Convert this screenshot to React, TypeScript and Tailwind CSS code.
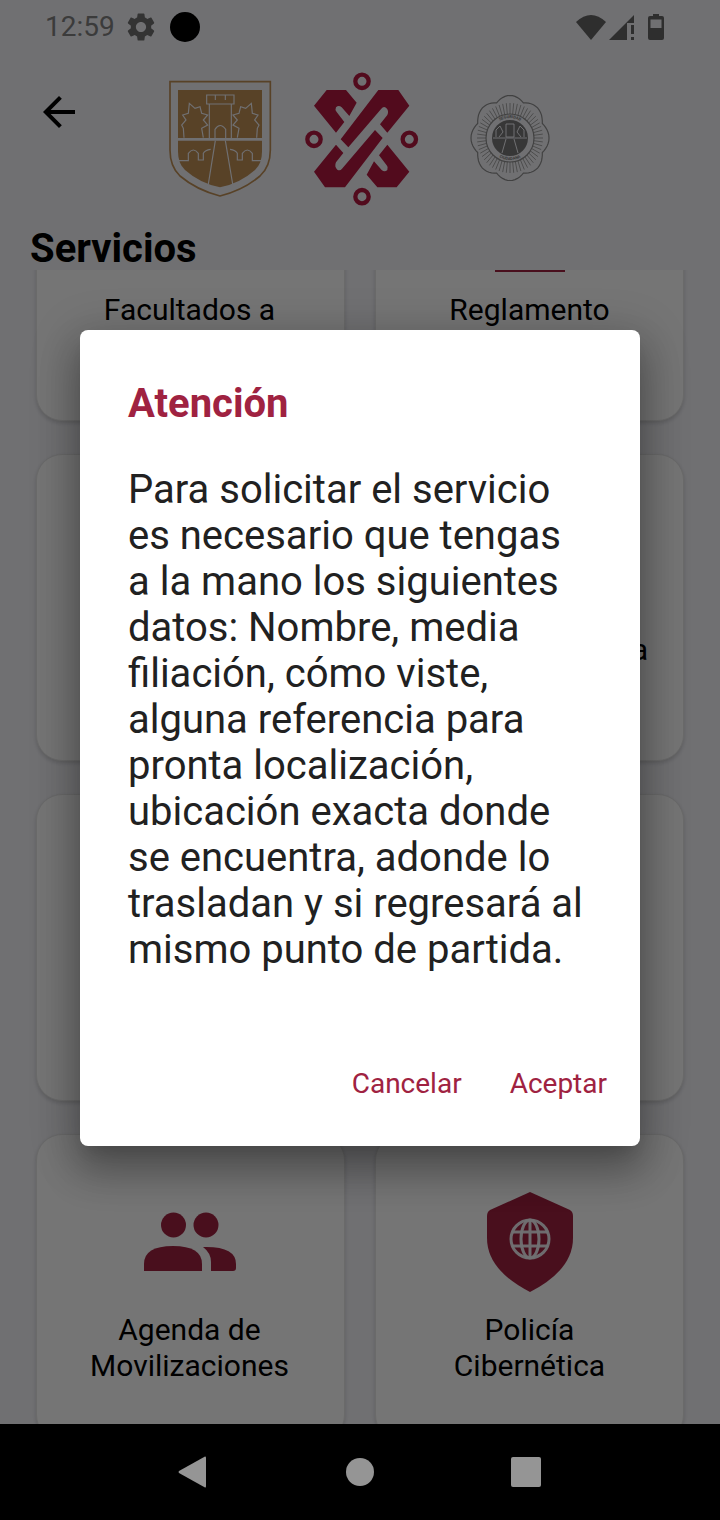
const roboto = { fontFamily: "Roboto, sans-serif" };

const GEAR =
  "M19.14 12.94c.04-.3.06-.61.06-.94 0-.32-.02-.64-.07-.94l2.03-1.58c.18-.14.23-.41.12-.61l-1.92-3.32c-.12-.22-.37-.29-.59-.22l-2.39.96c-.5-.38-1.03-.7-1.62-.94l-.36-2.54c-.04-.24-.24-.41-.48-.41h-3.84c-.24 0-.43.17-.47.41l-.36 2.54c-.59.24-1.13.57-1.62.94l-2.39-.96c-.22-.08-.47 0-.59.22L2.74 8.87c-.12.21-.08.47.12.61l2.03 1.58c-.05.3-.09.63-.09.94s.02.64.07.94l-2.03 1.58c-.18.14-.23.41-.12.61l1.92 3.32c.12.22.37.29.59.22l2.39-.96c.5.38 1.03.7 1.62.94l.36 2.54c.05.24.24.41.48.41h3.84c.24 0 .44-.17.47-.41l.36-2.54c.59-.24 1.13-.56 1.62-.94l2.39.96c.22.08.47 0 .59-.22l1.92-3.32c.12-.22.07-.47-.12-.61l-2.01-1.58zM12 15.6c-1.98 0-3.6-1.62-3.6-3.6s1.62-3.6 3.6-3.6 3.6 1.62 3.6 3.6-1.62 3.6-3.6 3.6z";

function StatusBar() {
  return (
    <div className="flex h-[54px] items-center justify-between pl-[45px] pr-[56px]">
      <div className="flex items-center">
        <span className="text-[28px] leading-none text-[#828282]">12:59</span>
        <svg viewBox="0 0 24 24" className="ml-[9px] h-[34px] w-[34px] fill-[#707070]">
          <path d={GEAR} />
        </svg>
        <div className="ml-[12px] h-[30px] w-[30px] rounded-full bg-black" />
      </div>
      <div className="flex items-center">
        <svg viewBox="0 0 30 25" className="h-[25px] w-[30px] fill-[#646464]">
          <path d="M0 7Q15 -7 30 7L15 25Z" />
        </svg>
        <svg viewBox="0 0 25 25" className="ml-[3px] h-[25px] w-[25px] fill-[#646464]">
          <path d="M0 25L25 0V8H18V25Z" />
          <rect x="22" y="10" width="3" height="9" />
          <rect x="22" y="22" width="3" height="3" />
        </svg>
        <svg viewBox="0 0 16 26" className="ml-[14px] h-[26px] w-4">
          <path
            fillRule="evenodd"
            className="fill-[#646464]"
            d="M5 0H11V2H14Q16 2 16 4V24Q16 26 14 26H2Q0 26 0 24V4Q0 2 2 2H5ZM2.500 5.500V14H13.500V5.500Z"
          />
        </svg>
      </div>
    </div>
  );
}

function ShieldLogo() {
  const line = { fill: "none", stroke: "#f4f4f9", strokeWidth: 3.5 };
  const lion = "M72 203L70 175L65 165L78 150L68 135L85 130L88 100L105 115L120 110L125 130L143 135L130 150L143 165L125 175L130 203";
  const arch = "M56 272H85V250Q100 230 115 250V270H130V250Q135 240 152 238";
  return (
    <svg viewBox="0 0 360 390" className="ml-[77px] h-[130px] w-[120px]">
      <path d="M30 35H331V240Q331 290 300 318Q250 360 180 378Q110 360 60 318Q30 290 30 240Z" fill="none" stroke="#c09056" strokeWidth="5" />
      <rect x="54" y="60" width="252" height="144" fill="#c09056" />
      <path d="M54 212H306V245Q306 280 285 300Q240 340 180 352Q120 340 75 300Q54 280 54 245Z" fill="#c09056" />
      <path d={lion} {...line} />
      <path d={lion} {...line} transform="matrix(-1 0 0 1 362 0)" />
      <path d="M148 204V102H140V75H222V102H214V204M140 102H222M166 75V90M196 75V90M165 204V178Q180 155 197 178V204" {...line} />
      <path d={arch} {...line} />
      <path d={arch} {...line} transform="matrix(-1 0 0 1 362 0)" />
      <path d="M166 212L145 342M196 212L218 342" {...line} />
    </svg>
  );
}

function KnotLogo() {
  const left = "M42 137L80 90H138L170 128L148 168L125 142Q116 134 108 142Q104 150 110 156L133 186L108 218Z";
  const right = "M235 90H295L328 137L262 218L240 193L262 165Q268 152 258 143Q250 138 244 146L145 262L122 238Z";
  return (
    <svg viewBox="0 0 390 450" className="ml-5 h-[150px] w-[130px] fill-[#b41841]">
      <path d={left} />
      <path d={right} />
      <path d={left} transform="rotate(180 185 236)" />
      <path d={right} transform="rotate(180 185 236)" />
      {[[186, 64], [42, 238], [328, 238], [186, 410]].map(([cx, cy]) => (
        <circle key={cx + "-" + cy} cx={cx} cy={cy} r="20" fill="none" stroke="#b41841" strokeWidth="13" />
      ))}
    </svg>
  );
}

function BadgeLogo() {
  const outline = Array.from({ length: 96 }, (_, i) => {
    const a = (i / 96) * Math.PI * 2;
    const r = 35 + 4 * Math.abs(Math.cos(4 * a));
    return `${(45 + r * Math.sin(a)).toFixed(1)},${(48 - r * 1.09 * Math.cos(a)).toFixed(1)}`;
  }).join(" ");
  const rays = Array.from({ length: 56 }, (_, i) => (i / 56) * Math.PI * 2);
  return (
    <svg viewBox="0 0 90 96" className="ml-[35px] mt-[6px] h-[96px] w-[90px]">
      <polygon points={outline} fill="#f4f4f9" stroke="#8f8f8f" strokeWidth="1.2" />
      {rays.map((a) => (
        <line
          key={a}
          x1={45 + 23 * Math.sin(a)}
          y1={48 - 23 * Math.cos(a)}
          x2={45 + 33 * Math.sin(a)}
          y2={48 - 35 * Math.cos(a)}
          stroke="#a8a8a8"
          strokeWidth="1"
        />
      ))}
      <circle cx="45" cy="48" r="24" fill="#f4f4f9" stroke="#8f8f8f" strokeWidth="1.2" />
      <circle cx="45" cy="48" r="18" fill="#787878" />
      <path id="badge-top" d="M25 48A20 20 0 0 1 65 48" fill="none" />
      <path id="badge-bottom" d="M23 48A22 22 0 0 0 67 48" fill="none" />
      <text fontSize="4" fontWeight="700" fill="#777" style={roboto}>
        <textPath href="#badge-top" startOffset="50%" textAnchor="middle">SEGURIDAD</textPath>
      </text>
      <text fontSize="4" fontWeight="700" fill="#777" style={roboto}>
        <textPath href="#badge-bottom" startOffset="50%" textAnchor="middle">CIUDADANA</textPath>
      </text>
      <path d="M41 34H49V47H41ZM28 48H62" fill="none" stroke="#f4f4f9" strokeWidth="1" />
      <path d="M41 49L37 63M49 49L53 63" fill="none" stroke="#f4f4f9" strokeWidth="1" />
      <path d="M31 47V40L35 36L38 42L34 47M59 47V40L55 36L52 42L56 47" fill="none" stroke="#f4f4f9" strokeWidth="1" />
    </svg>
  );
}

function PeopleIcon() {
  return (
    <svg viewBox="0 0 92 64" className="h-16 w-[92px] fill-[#9f2241]">
      <circle cx="29.500" cy="15" r="12.500" />
      <circle cx="62" cy="15" r="12.500" />
      <path d="M0 61V54Q0 36 29 36Q58 36 58 54V61Z" />
      <path d="M59 37Q92 36 92 54V58Q92 61 89 61H67V52Q67 43 59 37Z" />
    </svg>
  );
}

function ShieldGlobeIcon() {
  return (
    <svg viewBox="0 0 86 100" className="h-[100px] w-[86px]">
      <path className="fill-[#9f2241]" d="M43 0L83 18Q86 20 86 24V46Q86 78 43 100Q0 78 0 46V24Q0 20 3 18Z" />
      <g fill="none" stroke="#f4f4f9" strokeOpacity="0.95" strokeWidth="3">
        <circle cx="43" cy="47" r="19" />
        <ellipse cx="43" cy="47" rx="9" ry="19" />
        <path d="M43 28V66M25 40H61M25 54H61" />
      </g>
    </svg>
  );
}

function BookIcon() {
  return (
    <svg viewBox="0 0 70 100" className="h-[100px] w-[70px] fill-[#9f2241]">
      <path d="M10 0H60Q70 0 70 10V100H0V10Q0 0 10 0Z" />
    </svg>
  );
}

// only what shows around the dialog gets a label
const cards: { id: string; label?: string; icon?: React.ReactNode; left?: boolean }[] = [
  { id: "facultados", label: "Facultados a", left: true },
  { id: "reglamento", label: "Reglamento", icon: <BookIcon /> },
  { id: "r2-left" },
  { id: "r2-right", label: "Traslado a Clínica" },
  { id: "r3-left" },
  { id: "r3-right" },
  { id: "agenda", label: "Agenda de\nMovilizaciones", icon: <PeopleIcon />, left: true },
  { id: "policia", label: "Policía\nCibernética", icon: <ShieldGlobeIcon /> },
];

function ServiceCard({ label, icon, left }: { label?: string; icon?: React.ReactNode; left?: boolean }) {
  return (
    <div className={`flex h-[307px] flex-col items-center rounded-[26px] border border-[#e6e6e6] bg-white pt-[57px] shadow-[0_2px_4px_rgba(0,0,0,0.16)] ${left ? "pr-[2px]" : ""}`}>
      <div className="flex h-[100px] items-center justify-center">{icon}</div>
      {label && <p className="mt-[20px] whitespace-pre-line text-center text-[30px] leading-[36px] text-black">{label}</p>}
    </div>
  );
}

export default function App() {
  return (
    <div className="flex h-[1520px] w-[720px] flex-col overflow-hidden bg-black" style={roboto}>
      <div className="relative h-[1424px] overflow-hidden bg-[#f4f4f9]">
        <StatusBar />
        <div className="mt-[6px] flex h-[150px] items-center pl-[35px]">
          <svg viewBox="0 0 24 24" className="-mt-[46px] h-12 w-12 shrink-0 fill-black">
            <path d="M20 11H7.830l5.590-5.590L12 4l-8 8 8 8 1.410-1.410L7.830 13H20v-2z" />
          </svg>
          <ShieldLogo />
          <KnotLogo />
          <BadgeLogo />
        </div>
        <h1 className="h-[60px] pl-[30px] pt-[15px] text-[40px] font-bold leading-[47px] text-black">Servicios</h1>
        <div className="h-[1154px] overflow-hidden">
          <div className="-mt-[156px] grid grid-cols-2 gap-x-[30px] gap-y-[33px] px-9">
            {cards.map((c) => (
              <ServiceCard key={c.id} label={c.label} icon={c.icon} left={c.left} />
            ))}
          </div>
        </div>

        {/* scrim + dialog */}
        <div className="absolute inset-0 flex justify-center bg-black/[0.54] pt-[330px]">
          <div className="flex h-[816px] w-[560px] flex-col rounded-lg bg-white pl-12 pr-[33px] pt-[50px] shadow-[0_24px_38px_3px_rgba(0,0,0,0.24),0_9px_46px_8px_rgba(0,0,0,0.16),0_11px_15px_-7px_rgba(0,0,0,0.1)]">
            <h2 className="text-[40px] font-bold leading-[47px] text-[#9f2241]">Atención</h2>
            <p className="mt-[40px] pr-6 text-[40px] leading-[46px] text-[#212121]">
              Para solicitar el servicio es necesario que tengas a la mano los siguientes datos: Nombre, media filiación, cómo viste, alguna referencia para pronta localización, ubicación exacta donde se encuentra, adonde lo trasladan y si regresará al mismo punto de partida.
            </p>
            <div className="mt-auto flex justify-end gap-[48px] pb-[44px] text-[28px] leading-[36px] text-[#9f2241]">
              <span>Cancelar</span>
              <span>Aceptar</span>
            </div>
          </div>
        </div>
      </div>

      <nav className="flex h-24 items-center pl-[178px]">
        <svg viewBox="0 0 28 32" className="h-8 w-7 fill-[#959595]">
          <path d="M27 0.500Q28 0 28 2V30Q28 32 27 31.500L1 17Q0 16 1 15Z" />
        </svg>
        <div className="ml-[140px] h-7 w-7 rounded-full bg-[#959595]" />
        <div className="ml-[137px] h-[30px] w-[30px] rounded-[2px] bg-[#959595]" />
      </nav>
    </div>
  );
}
